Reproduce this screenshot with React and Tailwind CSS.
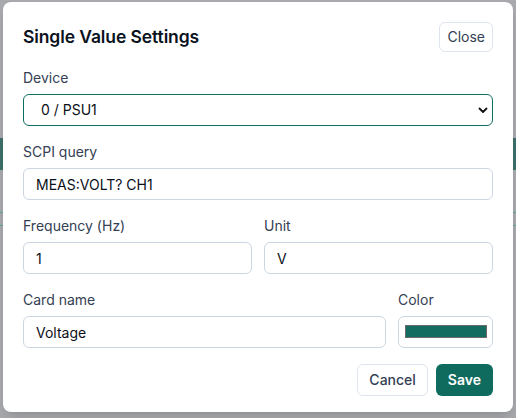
import { useState } from 'react';

function Field({ label, children }) {
  return (
    <div className="flex flex-col min-w-0">
      <label className="text-sm leading-5 text-[#344054] mb-1.5">{label}</label>
      {children}
    </div>
  );
}

function TextInput({ value, onChange }) {
  return (
    <input
      value={value}
      onChange={(e) => onChange(e.target.value)}
      className="h-8 w-full rounded-md border border-[#ccd6e3] bg-white px-3 text-sm text-[#0b0f19] outline-none"
    />
  );
}

export default function App() {
  const [device, setDevice] = useState('0');
  const [query, setQuery] = useState('MEAS:VOLT? CH1');
  const [freq, setFreq] = useState('1');
  const [unit, setUnit] = useState('V');
  const [name, setName] = useState('Voltage');

  return (
    <div className="relative w-[516px] h-[418px] overflow-hidden bg-[#a7a9ac]" style={{ fontFamily: 'Inter, "Liberation Sans", sans-serif' }}>
      {/* dimmed page behind the modal */}
      <div className="flex flex-col pt-[138px]">
        <div className="h-8 bg-[#3f6f6a]" />
        <div className="h-[42px]" />
        <div className="h-px bg-[#5aa59b]" />
        <div className="h-3" />
        <div className="h-px bg-[#5aa59b]" />
      </div>

      {/* modal */}
      <div className="absolute left-[3px] top-[2px] w-[510px] rounded-lg bg-white px-5 pt-5 pb-4 shadow-lg">
        <div className="flex items-center justify-between mb-4">
          <h2 className="text-[17.5px] font-semibold tracking-[-0.1px] text-[#0b1220]">Single Value Settings</h2>
          <button className="h-[30px] rounded-md border border-[#dfe5ee] px-[7px] text-sm text-[#344054]">Close</button>
        </div>

        <div className="flex flex-col gap-4">
          <Field label="Device">
            <div className="relative">
              <select
                value={device}
                onChange={(e) => setDevice(e.target.value)}
                className="h-8 w-full appearance-none rounded-md border border-[#0f6e62] bg-white pl-[17px] pr-8 text-sm text-[#0b0f19] outline-none"
              >
                <option value="0">0 / PSU1</option>
                <option value="1">1 / DMM1</option>
              </select>
              <svg className="pointer-events-none absolute right-[5px] top-1/2 -translate-y-1/2" width="10" height="10" viewBox="0 0 10 10">
                <path d="M1.5 3.5 L5 7 L8.5 3.5" fill="none" stroke="#111" strokeWidth="1.8" strokeLinecap="round" strokeLinejoin="round" />
              </svg>
            </div>
          </Field>

          <Field label="SCPI query">
            <TextInput value={query} onChange={setQuery} />
          </Field>

          <div className="grid grid-cols-2 gap-3">
            <Field label="Frequency (Hz)">
              <TextInput value={freq} onChange={setFreq} />
            </Field>
            <Field label="Unit">
              <TextInput value={unit} onChange={setUnit} />
            </Field>
          </div>

          <div className="grid grid-cols-[1fr_95px] gap-3">
            <Field label="Card name">
              <TextInput value={name} onChange={setName} />
            </Field>
            <Field label="Color">
              <div className="h-8 w-full rounded-md border border-[#ccd6e3] bg-white pl-[6px] pr-[5px] pt-2 pb-[9px]">
                <div className="h-full w-full border border-[#6b6b6b] bg-[#146b60]" />
              </div>
            </Field>
          </div>
        </div>

        <div className="mt-4 flex justify-end gap-2">
          <button className="h-8 rounded-md border border-[#dfe5ee] bg-white px-[11px] text-sm font-medium text-[#344054]">Cancel</button>
          <button className="h-8 rounded-md bg-[#0f6b5d] px-3 text-sm font-semibold text-white">Save</button>
        </div>
      </div>
    </div>
  );
}
